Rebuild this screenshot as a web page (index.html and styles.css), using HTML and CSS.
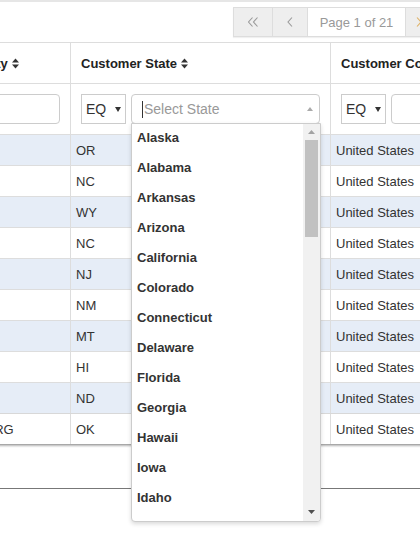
FILE: index.html
```html
<!DOCTYPE html>
<html>
<head>
<meta charset="utf-8">
<link rel="stylesheet" href="styles.css">
</head>
<body>
<div class="topline"></div>
<div class="pager">
  <span class="pg-btn pg-first"><svg width="10" height="10" viewBox="0 0 10 10"><polyline points="4.5,0.5 0.5,5 4.5,9.5" /><polyline points="9.5,0.5 5.5,5 9.5,9.5" /></svg></span>
  <span class="pg-btn pg-prev"><svg width="6" height="10" viewBox="0 0 6 10"><polyline points="5,0.5 1,5 5,9.5" /></svg></span>
  <span class="pg-info">Page 1 of 21</span>
  <span class="pg-btn pg-next"><svg width="6" height="10" viewBox="0 0 6 10"><polyline points="1,0.5 5,5 1,9.5" /></svg></span>
</div>

<div class="grid">
  <div class="grid-inner">
    <div class="row head">
      <div class="cell c1"><span>Customer City</span><svg class="sort" width="7" height="11" viewBox="0 0 7 11"><path d="M0 4.5 L3.5 0.5 L7 4.5Z M0 6.5 L3.5 10.5 L7 6.5Z"/></svg></div>
      <div class="cell c2"><span>Customer State</span><svg class="sort" width="7" height="11" viewBox="0 0 7 11"><path d="M0 4.5 L3.5 0.5 L7 4.5Z M0 6.5 L3.5 10.5 L7 6.5Z"/></svg></div>
      <div class="cell c3"><span>Customer Country</span><svg class="sort" width="7" height="11" viewBox="0 0 7 11"><path d="M0 4.5 L3.5 0.5 L7 4.5Z M0 6.5 L3.5 10.5 L7 6.5Z"/></svg></div>
    </div>
    <div class="row filter">
      <div class="cell c1"><div class="op"><span>EQ</span><svg width="6" height="5" viewBox="0 0 6 5"><path d="M0 0H6L3 5Z"/></svg></div><div class="inp"></div></div>
      <div class="cell c2"><div class="op"><span>EQ</span><svg width="6" height="5" viewBox="0 0 6 5"><path d="M0 0H6L3 5Z"/></svg></div><div class="inp select"><span class="caret"></span><span class="ph">Select State</span><svg class="sel-arrow" width="6" height="4" viewBox="0 0 6 4"><path d="M0 4H6L3 0Z"/></svg></div></div>
      <div class="cell c3"><div class="op"><span>EQ</span><svg width="6" height="5" viewBox="0 0 6 5"><path d="M0 0H6L3 5Z"/></svg></div><div class="inp"></div></div>
    </div>
    <div class="row data odd"><div class="cell c1">Salem</div><div class="cell c2">OR</div><div class="cell c3">United States</div></div>
    <div class="row data"><div class="cell c1">Durham</div><div class="cell c2">NC</div><div class="cell c3">United States</div></div>
    <div class="row data odd"><div class="cell c1">Casper</div><div class="cell c2">WY</div><div class="cell c3">United States</div></div>
    <div class="row data"><div class="cell c1">Raleigh</div><div class="cell c2">NC</div><div class="cell c3">United States</div></div>
    <div class="row data odd"><div class="cell c1">Newark</div><div class="cell c2">NJ</div><div class="cell c3">United States</div></div>
    <div class="row data"><div class="cell c1">Taos</div><div class="cell c2">NM</div><div class="cell c3">United States</div></div>
    <div class="row data odd"><div class="cell c1">Helena</div><div class="cell c2">MT</div><div class="cell c3">United States</div></div>
    <div class="row data"><div class="cell c1">Hilo</div><div class="cell c2">HI</div><div class="cell c3">United States</div></div>
    <div class="row data odd"><div class="cell c1">Fargo</div><div class="cell c2">ND</div><div class="cell c3">United States</div></div>
    <div class="row data last"><div class="cell c1">WILLIAMSBURG</div><div class="cell c2">OK</div><div class="cell c3">United States</div></div>
  </div>
</div>
<div class="footer-line"></div>

<div class="dropdown">
  <ul class="dd-list">
    <li>Alaska</li>
    <li>Alabama</li>
    <li>Arkansas</li>
    <li>Arizona</li>
    <li>California</li>
    <li>Colorado</li>
    <li>Connecticut</li>
    <li>Delaware</li>
    <li>Florida</li>
    <li>Georgia</li>
    <li>Hawaii</li>
    <li>Iowa</li>
    <li>Idaho</li>
    <li>Illinois</li>
    <li>Indiana</li>
  </ul>
  <div class="dd-scroll">
    <div class="sb-btn"><svg width="7" height="4" viewBox="0 0 7 4"><path d="M0 4H7L3.5 0Z" fill="#a3a3a3"/></svg></div>
    <div class="sb-thumb"></div>
    <div class="sb-space"></div>
    <div class="sb-btn sb-down"><svg width="7" height="4" viewBox="0 0 7 4"><path d="M0 0H7L3.5 4Z" fill="#505050"/></svg></div>
  </div>
</div>
</body>
</html>
```
FILE: styles.css
```css
html, body {
  margin: 0;
  padding: 0;
}
body {
  width: 420px;
  height: 538px;
  overflow: hidden;
  position: relative;
  background: #fff;
  font-family: "Liberation Sans", Arial, sans-serif;
  font-size: 13px;
  color: #333;
}
.topline {
  height: 2px;
  background: #e6e6e6;
}
.pager {
  display: flex;
  width: max-content;
  height: 30px;
  box-sizing: border-box;
  margin: 5px 0 0 233px;
  border: 1px solid #ddd;
  box-shadow: 0 1px 1px rgba(0, 0, 0, 0.06);
}
.pg-btn {
  display: flex;
  align-items: center;
  justify-content: center;
  background: #eee;
}
.pg-btn svg polyline {
  fill: none;
  stroke: #9a9a9a;
  stroke-width: 1.1;
}
.pg-first {
  width: 38px;
  border-right: 1px solid #ddd;
}
.pg-prev {
  width: 34px;
  border-right: 1px solid #ddd;
}
.pg-info {
  width: 97px;
  border-right: 1px solid #ddd;
  background: #fff;
  color: #999;
  display: flex;
  align-items: center;
  justify-content: center;
}
.pg-next {
  width: 40px;
  justify-content: flex-start;
  padding-left: 10px;
  box-sizing: border-box;
}
.pg-next svg polyline {
  stroke: #e0b46a;
}

.grid {
  margin-top: 5px;
  overflow: hidden;
  padding-bottom: 4px;
}
.grid-inner {
  margin-left: -91px;
  width: 622px;
  border-top: 1px solid #ddd;
}
.row {
  display: flex;
  border-bottom: 1px solid #ddd;
}
.cell {
  flex: none;
  box-sizing: border-box;
  border-right: 1px solid #ddd;
}
.c1 { width: 162px; }
.c2 { width: 260px; }
.c3 { width: 200px; }

.head .cell {
  height: 40px;
  display: flex;
  align-items: center;
  padding: 0 10px;
  font-weight: bold;
  color: #222;
  white-space: nowrap;
}
.sort {
  margin-left: 4px;
  fill: #333;
}

.filter .cell {
  height: 50px;
  display: flex;
  gap: 5px;
  padding: 10px 10px 0;
}
.op {
  flex: none;
  width: 45px;
  height: 30px;
  box-sizing: border-box;
  border: 1px solid #ccc;
  display: flex;
  align-items: center;
  justify-content: space-between;
  padding: 0 4px 0 4px;
  font-size: 14px;
  color: #333;
}
.op svg {
  fill: #333;
}
.inp {
  flex: 1;
  height: 30px;
  box-sizing: border-box;
  border: 1px solid #ccc;
  border-radius: 4px;
  background: #fff;
}
.select {
  display: flex;
  align-items: center;
  padding: 0 6px 0 10px;
}
.caret {
  width: 1px;
  height: 17px;
  background: #333;
}
.ph {
  margin-left: 1px;
  font-size: 14px;
  color: #999;
}
.sel-arrow {
  margin-left: auto;
  fill: #aaa;
}

.data .cell {
  height: 30px;
  line-height: 31px;
  padding: 0 5px;
  white-space: nowrap;
  overflow: hidden;
}
.data.odd {
  background: #e6edf7;
}
.data.last {
  border-bottom-color: #a8a8a8;
  box-shadow: 0 1px 2px rgba(0, 0, 0, 0.3);
}

.footer-line {
  margin-top: 39px;
  height: 1px;
  background: #777;
}

.dropdown {
  position: absolute;
  left: 131px;
  top: 123px;
  width: 190px;
  height: 399px;
  box-sizing: border-box;
  border: 1px solid #ccc;
  border-radius: 0 0 4px 4px;
  background: #fff;
  box-shadow: 0 2px 4px rgba(0, 0, 0, 0.15);
  display: flex;
  overflow: hidden;
}
.dd-list {
  flex: 1;
  margin: 0;
  padding: 0;
  list-style: none;
  overflow: hidden;
}
.dd-list li {
  height: 30px;
  box-sizing: border-box;
  padding: 5px 5px 7px;
  line-height: 18px;
  font-weight: bold;
  color: #333;
  white-space: nowrap;
}
.dd-scroll {
  flex: none;
  width: 17px;
  background: #f1f1f1;
  display: flex;
  flex-direction: column;
}
.sb-btn {
  height: 16px;
  display: flex;
  align-items: center;
  justify-content: center;
}
.sb-thumb {
  height: 97px;
  margin: 0 2px;
  background: #c1c1c1;
}
.sb-space {
  flex: 1;
}
.sb-down {
  height: 19px;
}
```
